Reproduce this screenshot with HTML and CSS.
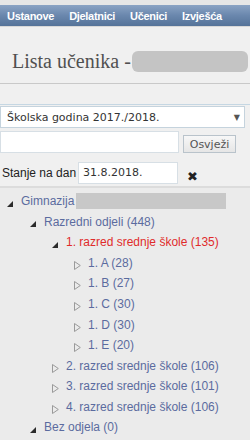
FILE: index.html
```html
<!DOCTYPE html>
<html lang="hr">
<head>
<meta charset="utf-8">
<link rel="stylesheet" href="styles.css">
</head>
<body>
<div class="topstrip"></div>
<nav class="nav">
  <a class="nav-item">Ustanove</a>
  <a class="nav-item">Djelatnici</a>
  <a class="nav-item">Učenici</a>
  <a class="nav-item">Izvješća</a>
</nav>
<div class="header">
  <h1 class="title">Lista učenika -<span class="blur title-blur"></span></h1>
</div>
<div class="band"></div>
<div class="filters">
  <div class="select">Školska godina 2017./2018.<span class="arrow">▼</span></div>
  <div class="row">
    <div class="input search"></div>
    <button class="btn">Osvježi</button>
  </div>
  <div class="row date-row">
    <span class="label">Stanje na dan</span>
    <div class="input date">31.8.2018.</div>
    <span class="clear">✖</span>
  </div>
</div>
<div class="tree">
  <div class="node l0"><span class="tri"><svg class="ico" width="6" height="6" viewBox="0 0 6 6"><path d="M0 6 L6 0 L6 6 Z" fill="#2b2b2b"/></svg></span><span class="txt">Gimnazija</span><span class="blur tree-blur"></span></div>
  <div class="node l1"><span class="tri"><svg class="ico" width="6" height="6" viewBox="0 0 6 6"><path d="M0 6 L6 0 L6 6 Z" fill="#2b2b2b"/></svg></span><span class="txt">Razredni odjeli (448)</span></div>
  <div class="node l2"><span class="tri"><svg class="ico" width="6" height="6" viewBox="0 0 6 6"><path d="M0 6 L6 0 L6 6 Z" fill="#2b2b2b"/></svg></span><span class="txt sel">1. razred srednje škole (135)</span></div>
  <div class="node l3"><span class="tri"><svg class="ico closed" width="7" height="9" viewBox="0 0 7 9"><path d="M0.5 0.5 L6.3 4.5 L0.5 8.5 Z" fill="none" stroke="#9a9a9a"/></svg></span><span class="txt">1. A (28)</span></div>
  <div class="node l3"><span class="tri"><svg class="ico closed" width="7" height="9" viewBox="0 0 7 9"><path d="M0.5 0.5 L6.3 4.5 L0.5 8.5 Z" fill="none" stroke="#9a9a9a"/></svg></span><span class="txt">1. B (27)</span></div>
  <div class="node l3"><span class="tri"><svg class="ico closed" width="7" height="9" viewBox="0 0 7 9"><path d="M0.5 0.5 L6.3 4.5 L0.5 8.5 Z" fill="none" stroke="#9a9a9a"/></svg></span><span class="txt">1. C (30)</span></div>
  <div class="node l3"><span class="tri"><svg class="ico closed" width="7" height="9" viewBox="0 0 7 9"><path d="M0.5 0.5 L6.3 4.5 L0.5 8.5 Z" fill="none" stroke="#9a9a9a"/></svg></span><span class="txt">1. D (30)</span></div>
  <div class="node l3"><span class="tri"><svg class="ico closed" width="7" height="9" viewBox="0 0 7 9"><path d="M0.5 0.5 L6.3 4.5 L0.5 8.5 Z" fill="none" stroke="#9a9a9a"/></svg></span><span class="txt">1. E (20)</span></div>
  <div class="node l2"><span class="tri"><svg class="ico closed" width="7" height="9" viewBox="0 0 7 9"><path d="M0.5 0.5 L6.3 4.5 L0.5 8.5 Z" fill="none" stroke="#9a9a9a"/></svg></span><span class="txt">2. razred srednje škole (106)</span></div>
  <div class="node l2"><span class="tri"><svg class="ico closed" width="7" height="9" viewBox="0 0 7 9"><path d="M0.5 0.5 L6.3 4.5 L0.5 8.5 Z" fill="none" stroke="#9a9a9a"/></svg></span><span class="txt">3. razred srednje škole (101)</span></div>
  <div class="node l2"><span class="tri"><svg class="ico closed" width="7" height="9" viewBox="0 0 7 9"><path d="M0.5 0.5 L6.3 4.5 L0.5 8.5 Z" fill="none" stroke="#9a9a9a"/></svg></span><span class="txt">4. razred srednje škole (106)</span></div>
  <div class="node l1"><span class="tri"><svg class="ico" width="6" height="6" viewBox="0 0 6 6"><path d="M0 6 L6 0 L6 6 Z" fill="#2b2b2b"/></svg></span><span class="txt">Bez odjela (0)</span></div>
</div>
</body>
</html>
```

FILE: styles.css
```css
* { box-sizing: border-box; }
html, body { margin: 0; padding: 0; }
body {
  width: 250px;
  height: 440px;
  overflow: hidden;
  background: #ebebeb;
  font-family: "Liberation Sans", Arial, sans-serif;
}
.topstrip { height: 5px; background: #e6e6e6; }
.nav {
  height: 22px;
  display: flex;
  align-items: center;
  padding-left: 7px;
  gap: 15px;
  background: linear-gradient(#8aa3c4, #6a87ad 50%, #557399);
  border-bottom: 1px solid #d8d8d8;
  white-space: nowrap;
  overflow: hidden;
}
.nav-item {
  color: #fff;
  font-weight: bold;
  font-size: 11px;
  letter-spacing: -0.3px;
  flex: none;
}
.header {
  background: #f0f0f0;
  height: 57px;
  padding: 22px 0 0 12px;
  border-bottom: 1px solid #c9c9c9;
  overflow: hidden;
}
.title {
  margin: 0;
  font-family: "Liberation Serif", Georgia, serif;
  font-weight: normal;
  font-size: 20px;
  color: #505050;
  display: flex;
  align-items: center;
  height: 24px;
  white-space: nowrap;
}
.blur {
  display: inline-block;
  background: #c4c4c4;
  border-radius: 6px;
  flex: none;
}
.title-blur { width: 116px; height: 21px; margin-left: 1px; }
.band {
  height: 21px;
  background: #f0f0f0;
  border-bottom: 1px solid #c5d7e3;
}
.filters {
  background: #f0f0f0;
  padding: 1px 5px 2px 0;
  border-bottom: 2px solid #dcdcdc;
  font-family: "DejaVu Sans", Verdana, sans-serif;
  font-size: 11px;
  color: #333;
}
.select {
  height: 22px;
  background: #fff;
  border: 1px solid #c5d3dd;
  display: flex;
  align-items: center;
  justify-content: space-between;
  padding: 0 4px 0 6px;
  font-size: 11px;
  white-space: nowrap;
}
.arrow { font-size: 8px; color: #555; }
.row { display: flex; align-items: flex-end; margin-top: 3px; }
.input {
  background: #fff;
  border: 1px solid #d7dfe5;
  height: 22px;
}
.search { width: 179px; }
.btn {
  margin-left: 4px;
  height: 18px;
  width: 53px;
  padding: 0;
  font-family: "DejaVu Sans", Verdana, sans-serif;
  font-size: 11px;
  color: #555;
  background: linear-gradient(#f7f7f7, #e6e6e6);
  border: 1px solid #b9c3cb;
}
.date-row { align-items: center; margin-top: 8px; }
.label {
  padding-left: 2px;
  width: 78px;
  flex: none;
  white-space: nowrap;
  font-family: "Liberation Sans", Arial, sans-serif;
  font-size: 12px;
  color: #222;
}
.date { width: 100px; display: flex; align-items: center; padding-left: 4px; font-size: 11px; }
.clear { margin-left: 9px; font-size: 13px; color: #222; margin-top: 8px; }
.tree {
  padding-top: 3px;
  font-size: 12px;
  color: #5b6b9f;
}
.node { height: 20.55px; display: flex; align-items: center; }
.l0 { padding-left: 7px; }
.l1 { padding-left: 30px; }
.l2 { padding-left: 52px; }
.l3 { padding-left: 74px; }
.tri { width: 14px; display: flex; align-items: center; flex: none; padding-top: 5px; }
.tri .closed { margin-top: 0; }
.ico { display: block; }
.txt { white-space: nowrap; }
.sel { color: #e02b2b; }
.tree-blur { width: 150px; height: 16px; border-radius: 0; margin-left: 2px; background: #c8c8c8; }
```
